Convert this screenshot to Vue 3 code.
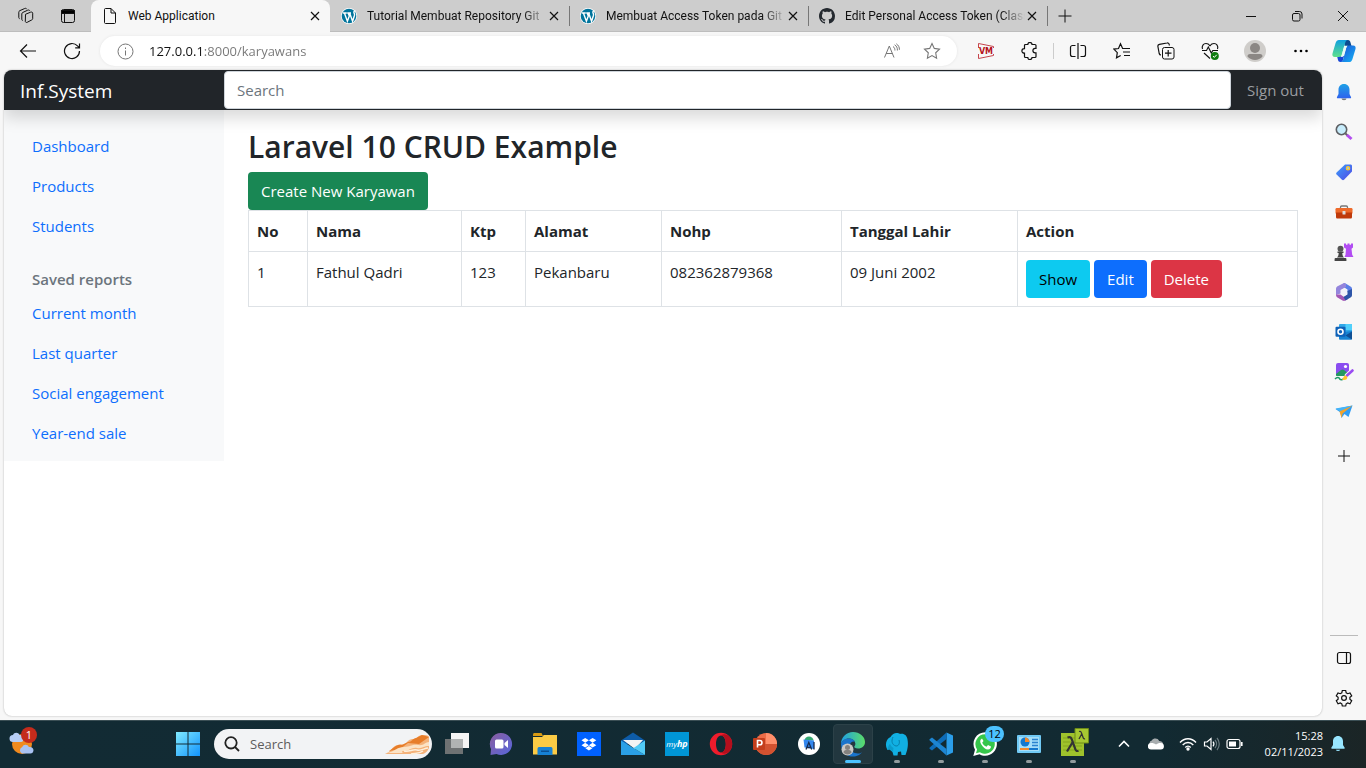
<script setup>
import { ref } from 'vue'

const tabs = [
  { title: 'Web Application', icon: 'page', active: true },
  { title: 'Tutorial Membuat Repository Git', icon: 'wp' },
  { title: 'Membuat Access Token pada Git', icon: 'wp' },
  { title: 'Edit Personal Access Token (Class', icon: 'github' }
]
const mainLinks = ['Dashboard', 'Products', 'Students']
const reportLinks = ['Current month', 'Last quarter', 'Social engagement', 'Year-end sale']
const columns = ['No', 'Nama', 'Ktp', 'Alamat', 'Nohp', 'Tanggal Lahir', 'Action']
const rows = [
  { no: 1, nama: 'Fathul Qadri', ktp: '123', alamat: 'Pekanbaru', nohp: '082362879368', lahir: '09 Juni 2002' }
]
const address = ref('127.0.0.1:8000/karyawans')
const query = ref('')
</script>

<template>
  <div class="desktop">
    <div class="browser">
      <header class="tabstrip">
        <div class="strip-tools">
          <button class="strip-btn" aria-label="Workspaces">
            <svg width="18" height="18" viewBox="0 0 18 18" class="line"><path d="m8.500 7.300 5-2.100c1-.4 2.200-.1 2.200 1v5.300c0 .7-.3 1.100-.9 1.400l-4.600 2.400c-1 .5-1.900 0-1.900-1zM5.700 13.500c-.6-.1-.9-.5-.9-1.100V7c0-.7.3-1.200.9-1.500l5-2.300c.9-.4 1.800-.1 2.100.6M2.600 11.700c-.5-.1-.8-.5-.8-1.100V5.200c0-.7.3-1.200.9-1.500l5-2.200c.9-.4 1.700-.1 2 .6" /></svg>
          </button>
          <button class="strip-btn" aria-label="Tab actions">
            <svg width="16" height="16" viewBox="0 0 16 16" class="line"><rect x="1.500" y="1.500" width="13" height="13" rx="2" /><path d="M1.500 2.500h13v3h-13z" fill="#000" /><path d="M4.500 6v8.500" /></svg>
          </button>
        </div>
        <div v-for="(tab, i) in tabs" :key="i" class="tab" :class="{ active: tab.active }">
          <svg v-if="tab.icon === 'page'" width="16" height="18" viewBox="0 0 16 18" class="line"><path d="M2.500 2.500c0-.6.4-1 1-1H9l4.500 4.500v9.500c0 .6-.4 1-1 1h-9c-.6 0-1-.4-1-1zM9 1.500V6h4.500" /></svg>
          <svg v-else-if="tab.icon === 'wp'" width="16" height="16" viewBox="0 0 16 16"><circle cx="8" cy="8" r="8" fill="#fff" /><circle cx="8" cy="8" r="7.300" fill="#00749c" /><path d="M1.800 5h4M3.400 5l3 8.300L8.300 8 7.200 5M6.200 5h3.800M8.600 5l3 8.300 1.900-6c.4-1.500-.8-2.100-.6-3.400.2-.8.8-1 1.300-.7" fill="none" stroke="#fff" stroke-width="1.400" /></svg>
          <svg v-else width="16" height="16" viewBox="0 0 16 16"><path fill="#24292f" d="M8 0C3.580 0 0 3.580 0 8c0 3.540 2.290 6.530 5.470 7.590.4.070.55-.17.55-.38 0-.19-.01-.82-.01-1.490-2.010.37-2.530-.49-2.690-.94-.09-.23-.48-.94-.82-1.130-.28-.15-.68-.52-.01-.53.63-.01 1.080.58 1.230.82.72 1.210 1.870.87 2.330.66.07-.52.28-.87.51-1.070-1.780-.2-3.640-.89-3.640-3.950 0-.87.31-1.590.82-2.150-.08-.2-.36-1.020.08-2.120 0 0 .67-.21 2.200.82.64-.18 1.320-.27 2-.27s1.360.09 2 .27c1.530-1.040 2.200-.82 2.200-.82.44 1.100.16 1.920.08 2.120.51.56.82 1.270.82 2.150 0 3.070-1.870 3.750-3.650 3.950.29.25.54.73.54 1.480 0 1.070-.01 1.930-.01 2.200 0 .21.15.46.55.38A8.010 8.010 0 0 0 16 8c0-4.420-3.580-8-8-8z" /></svg>
          <a class="tab-title" :class="{ faded: !tab.active }" href="#">{{ tab.title }}</a>
          <button class="tab-close" aria-label="Close tab">
            <svg width="10" height="10" viewBox="0 0 10 10" class="line"><path d="m1 1 8 8M9 1 1 9" stroke-width="1.200" /></svg>
          </button>
        </div>
        <button class="new-tab" aria-label="New tab">
          <svg width="14" height="14" viewBox="0 0 14 14" class="line"><path d="M7 .5v13M.5 7h13" /></svg>
        </button>
        <div class="window-controls">
          <button aria-label="Minimize"><svg width="12" height="12" viewBox="0 0 12 12" class="line"><path d="M1 6.500h10" /></svg></button>
          <button aria-label="Restore"><svg width="12" height="12" viewBox="0 0 12 12" class="line"><rect x="1.500" y="3.500" width="7.500" height="7.500" rx="1.500" /><path d="M4 1.500h4.500a2.500 2.500 0 0 1 2.500 2.500v4.500" /></svg></button>
          <button aria-label="Close window"><svg width="12" height="12" viewBox="0 0 12 12" class="line"><path d="m1 1 10 10M11 1 1 11" /></svg></button>
        </div>
      </header>

      <div class="toolbar">
        <button class="tool" aria-label="Back"><svg width="18" height="16" viewBox="0 0 18 16" class="line"><path d="M17 8H1.500M8 1.500 1.500 8 8 14.500" stroke-width="1.200" /></svg></button>
        <button class="tool" aria-label="Refresh"><svg width="18" height="18" viewBox="0 0 18 18" class="line"><path d="M16.500 9a7.500 7.500 0 1 1-2-5.100l1.800 1.700M16.500 1.500v4.300h-4.300" stroke-width="1.200" /></svg></button>
        <div class="address">
          <svg width="17" height="17" viewBox="0 0 17 17" class="line gray"><circle cx="8.500" cy="8.500" r="7.500" /><path d="M8.500 7.500v5M8.500 4.500V6" /></svg>
          <input v-model="address" class="address-input" type="text" aria-label="Address">
          <button class="address-btn" aria-label="Read aloud"><svg width="18" height="16" viewBox="0 0 18 16" class="line gray"><path d="M1.500 14.500 6.300 3l4.700 11.500M3 10.500h6.500M10 3.500c1.500 1 2 2.300 1.900 4M11.600 1.800c2 1.200 2.900 3 2.800 5.700M13.300.8c2.200 1.400 3.200 3.500 3.100 6" /></svg></button>
          <button class="address-btn" aria-label="Add to favorites"><svg width="18" height="18" viewBox="0 0 18 18" class="line gray"><path d="m9 1.500 2.300 4.900 5.200.7-3.800 3.700.9 5.400L9 13.600l-4.600 2.600.9-5.400L1.500 7.100l5.200-.7z" stroke-width="1.100" /></svg></button>
        </div>
        <button class="tool" aria-label="VM extension">
          <svg width="18" height="18" viewBox="0 0 18 18"><path d="M1.500 6V1.500l15 3V6M1.500 12v4.500l15-3V12" fill="none" stroke="#c6454d" /><text x="9" y="12" class="vm">VM</text></svg>
        </button>
        <button class="tool" aria-label="Extensions"><svg width="18" height="18" viewBox="0 0 18 18" class="line"><path d="M4.500 2.500h2.300a2.100 2.100 0 0 1 4.200 0h3c.6 0 1 .4 1 1v2.800h-.8a2.300 2.300 0 0 0 0 4.600h.8v3.600c0 .6-.4 1-1 1h-3a2.100 2.100 0 0 1-4.200 0H4.500c-.6 0-1-.4-1-1v-3.300h-.3a2.300 2.300 0 0 1 0-4.600h.3V3.500c0-.6.4-1 1-1z" stroke-width="1.200" /></svg></button>
        <span class="divider"></span>
        <button class="tool" aria-label="Split screen"><svg width="18" height="18" viewBox="0 0 18 18" class="line"><path d="M6.500 3.500h-3c-1 0-2 1-2 2v7c0 1 1 2 2 2h3M11.500 3.500h3c1 0 2 1 2 2v7c0 1-1 2-2 2h-3M9 1v16" stroke-width="1.200" /></svg></button>
        <button class="tool" aria-label="Favorites"><svg width="18" height="18" viewBox="0 0 18 18" class="line"><path d="M12.500 6.500H9.600L7.500 1.800 5.500 6.500.9 7.100l3.400 3.500-.8 5.200 4.200-2.300M11 6.500h6M10 10h7M11 13.500h6" stroke-width="1.200" /></svg></button>
        <button class="tool" aria-label="Collections"><svg width="18" height="18" viewBox="0 0 18 18" class="line"><rect x="5.500" y="5.500" width="11.500" height="11.500" rx="2" /><path d="M11.200 8v6.500M8 11.200h6.500M4 13c-1 0-1.600-.6-1.800-1.500L.9 4.500C.7 3.300 1.300 2.500 2.400 2.300L10 1c1-.2 2 .4 2.200 1.500l.2 1" stroke-width="1.200" /></svg></button>
        <button class="tool" aria-label="Browser essentials"><svg width="18" height="18" viewBox="0 0 18 18" class="line"><path d="M1.500 7C.5 4 2.400 1.500 5 1.500c2 0 3 .8 4 2.200 1-1.400 2-2.200 4-2.200 2.600 0 4.500 2.500 3.500 5.500M1 8.500h4.500L7.300 5l3 6 1.500-2.500H17M3 11l6 5.500" stroke-width="1.100" /><circle cx="13.800" cy="14" r="4" fill="#107c10" stroke="none" /><path d="m12 14 1.300 1.400 2.400-2.600" stroke="#fff" /></svg></button>
        <button class="tool profile" aria-label="Profile"><svg width="22" height="22" viewBox="0 0 22 22"><circle cx="11" cy="11" r="11" fill="#cfcdca" /><circle cx="11" cy="8" r="5" fill="#8b8784" /><path d="M3.500 16.500c0-1.500.8-2.500 2.500-2.500h10c1.700 0 2.500 1 2.500 2.500a10 10 0 0 1-15 0z" fill="#8b8784" /></svg></button>
        <button class="tool" aria-label="Settings and more"><svg width="16" height="16" viewBox="0 0 16 16"><circle cx="3.500" cy="8" r="1.300" /><circle cx="9" cy="8" r="1.300" /><circle cx="14.500" cy="8" r="1.300" /></svg></button>
        <button class="tool" aria-label="Copilot">
          <svg width="24" height="24" viewBox="0 0 24 24">
            <defs>
              <linearGradient id="cpA" x1="0" y1="0" x2="0" y2="1"><stop offset="0" stop-color="#0f9fe0" /><stop offset="1" stop-color="#5fe08b" /></linearGradient>
              <linearGradient id="cpB" x1="0" y1="0" x2="1" y2="1"><stop offset="0" stop-color="#1b4fd8" /><stop offset="1" stop-color="#16b4f4" /></linearGradient>
            </defs>
            <path d="M12 1h4c1.500 0 2.200 1 2.500 2.500L19.500 7h-7z" fill="#0b4a8f" />
            <path d="M5 17h7l-1 4c-.4 1.400-1.200 2-2.500 2-1.500 0-2.200-1-2.500-2z" fill="#1746d6" />
            <path d="M7 1h9c-1.700 0-2.300 1.200-2.800 2.800L9.800 15.500C9.300 17.300 8.500 18 7 18H3c-2.300 0-3-1.600-2.500-3.500L3.600 4C4.300 2 5.300 1 7 1z" fill="url(#cpA)" />
            <path d="M17 6.500h4c2.300 0 3 1.600 2.500 3.500l-3.100 10.200c-.7 2-1.700 2.800-3.400 2.800H8.500c1.500 0 2.200-1.200 2.700-2.800L14.200 9c.5-1.800 1.300-2.500 2.800-2.500z" fill="url(#cpB)" />
            <path d="M12.300 6.800h3.700c-1 .3-1.500 1-1.900 2.300l-2.300 7.500c-.3.900-.8 1.300-1.600 1.300H8.500c.8-.4 1.200-1.200 1.500-2.300z" fill="#e9fbf5" />
          </svg>
        </button>
      </div>

      <div class="viewport">
        <div class="page">
          <header class="navbar">
            <a class="brand" href="#">Inf.System</a>
            <input v-model="query" class="search" type="text" placeholder="Search" aria-label="Search">
            <a class="signout" href="#">Sign out</a>
          </header>
          <div class="layout">
            <nav class="sidebar">
              <ul>
                <li v-for="l in mainLinks" :key="l"><a href="#">{{ l }}</a></li>
              </ul>
              <h6>Saved reports</h6>
              <ul>
                <li v-for="l in reportLinks" :key="l"><a href="#">{{ l }}</a></li>
              </ul>
            </nav>
            <main class="content">
              <h2>Laravel 10 CRUD Example</h2>
              <a class="btn success" href="#">Create New Karyawan</a>
              <table>
                <colgroup>
                  <col class="c-no"><col class="c-nama"><col class="c-ktp"><col class="c-alamat"><col class="c-nohp"><col class="c-lahir"><col>
                </colgroup>
                <thead>
                  <tr><th v-for="c in columns" :key="c" scope="col">{{ c }}</th></tr>
                </thead>
                <tbody>
                  <tr v-for="r in rows" :key="r.no">
                    <td>{{ r.no }}</td>
                    <td>{{ r.nama }}</td>
                    <td>{{ r.ktp }}</td>
                    <td>{{ r.alamat }}</td>
                    <td>{{ r.nohp }}</td>
                    <td>{{ r.lahir }}</td>
                    <td>
                      <div class="actions">
                        <a class="btn info" href="#">Show</a>
                        <a class="btn primary" href="#">Edit</a>
                        <button class="btn danger" type="submit">Delete</button>
                      </div>
                    </td>
                  </tr>
                </tbody>
              </table>
            </main>
          </div>
        </div>

        <aside class="edge-bar">
          <button aria-label="Notifications"><svg width="18" height="18" viewBox="0 0 18 18"><defs><linearGradient id="bell" x1="0" y1="0" x2="0" y2="1"><stop offset="0" stop-color="#1fa2e6" /><stop offset="1" stop-color="#2f62ee" /></linearGradient></defs><path d="M6.500 15.500h5a2.500 1.800 0 0 1-5 0z" fill="#777" /><path d="M9 1C5.500 1 3.500 3.500 3.500 6.500V11L2 14c-.3.800 0 1.300.8 1.300h12.400c.8 0 1.100-.5.800-1.300l-1.500-3V6.500C14.500 3.500 12.500 1 9 1z" fill="url(#bell)" /></svg></button>
          <button aria-label="Search"><svg width="18" height="18" viewBox="0 0 18 18" fill="none"><path d="m10.500 10.500 2 2" stroke="#666" stroke-width="2" /><path d="m12 12 4.500 4" stroke="#b44df0" stroke-width="3" /><circle cx="6.500" cy="6.500" r="5.200" fill="#c7ecfb" stroke="#5e6064" stroke-width="1.600" /></svg></button>
          <button aria-label="Shopping"><svg width="18" height="18" viewBox="0 0 18 18"><defs><linearGradient id="tagG" x1="0" y1="0" x2="1" y2="1"><stop offset="0" stop-color="#3da0fa" /><stop offset="1" stop-color="#5046e5" /></linearGradient></defs><path d="M10 1.500h5.500c.8 0 1.500.6 1.500 1.400V8.500L9 16.800c-.7.6-1.300.6-2 0L1.600 11.500c-.6-.6-.6-1.200 0-1.900z" fill="url(#tagG)" /><circle cx="13" cy="5.300" r="1.700" fill="#9fc5e8" stroke="#ffc928" stroke-width="1.200" /></svg></button>
          <button aria-label="Tools"><svg width="18" height="18" viewBox="0 0 18 18"><path d="M5.500 6V4.200c0-.8.500-1.200 1.200-1.200h4.600c.7 0 1.200.4 1.200 1.200V6" fill="none" stroke="#777" stroke-width="1.300" /><rect x=".5" y="5" width="17" height="6" rx="1.200" fill="#ee6a2a" /><path d="M1 9.500h16V14c0 .8-.4 1.500-1.200 1.500H2.200C1.400 15.500 1 14.800 1 14z" fill="#bf3a0b" /><rect x="7.500" y="8" width="3" height="3.500" rx=".6" fill="#ddd" /></svg></button>
          <button aria-label="Games"><svg width="20" height="20" viewBox="0 0 20 20"><path d="M10 1.500h2v1.300h1.500V1.500h2v1.300H17V1.500h2v4l-1.500 1.200.7 6 1.300 2.300H10.500l1-2.300.5-6L10 5.500z" fill="#b24df2" /><circle cx="6.500" cy="6.800" r="3" fill="#555" /><path d="M3.500 9.500h6v1.600H8.300c0 2 .6 3.400 1.700 4.400H3c1.100-1 1.700-2.400 1.700-4.400H3.500zM1.500 16h10c.6 0 .9.400.9 1v2H.6v-2c0-.6.300-1 .9-1z" fill="#444" /></svg></button>
          <button aria-label="Microsoft 365"><svg width="18" height="18" viewBox="0 0 18 18"><path d="M9 0c.6 0 1 .2 1.600.5L15.500 3.500c1 .6 1.500 1.500 1.500 2.500v6L12.500 9V6.500L7 3z" fill="#5b7fe8" /><path d="M9 0 3 3C1.700 3.700 1 4.700 1 6v6l4.500-1.500V7L11 4V1z" fill="#9485dc" /><path d="M1 11.500c0 1.500.4 2.300 1.500 3l5 3c1 .6 2 .6 3 0L13 16V11.500L9 14l-3.500-2.500z" fill="#a357b5" /><path d="M12.500 8 17 6v6c0 1.100-.5 1.800-1.500 2.500l-5 3L8.500 14l4-2.500z" fill="#2d55a8" /><path d="m9 5.500 3 1.700v3.600l-3 1.700-3-1.700V7.200z" fill="#f2f2fa" /></svg></button>
          <button aria-label="Outlook"><svg width="18" height="18" viewBox="0 0 18 18"><rect x="4" y="1" width="13" height="14" rx="1" fill="#31a8e8" /><path d="M10.500 1H16c.6 0 1 .4 1 1v5h-6.500z" fill="#50d0fb" /><path d="M4 9.500 17 8v7.500c0 .8-.5 1.300-1.300 1.300H5.200c-.8 0-1.200-.5-1.200-1.300z" fill="#1683d3" /><path d="m17 8.500-6.500 4 6.500 4z" fill="#0f4f94" /><rect x=".5" y="3.800" width="10" height="10" rx="1" fill="#0f62b8" /><circle cx="5.500" cy="8.800" r="2.500" fill="none" stroke="#fff" stroke-width="1.600" /></svg></button>
          <button aria-label="Image creator"><svg width="20" height="20" viewBox="0 0 20 20"><rect x="2" y="1" width="13" height="13" rx="2" fill="#8a4df0" /><path d="m2 12 5-4c1-.7 2-.7 3 0l5 4v1c0 .6-.5 1-1 1H3c-.6 0-1-.4-1-1z" fill="#249860" /><circle cx="11.500" cy="4.500" r="1.600" fill="#fff" /><path d="M1 17c2-2 4-2 4.500-.5S8 18 9.500 17" fill="none" stroke="#1f9a67" stroke-width="1.600" /><path d="m18.500 8.500-5.500 5" stroke="#f7f7f7" stroke-width="4.500" stroke-linecap="round" /><path d="m18.500 8.500-5.500 5" stroke="#9a4cf2" stroke-width="2.600" stroke-linecap="round" /><path d="M11 13.500c1.500 0 2.500 1 2.300 2.300C13 18 10.500 18.500 8 17.700c1.500-.8 1-3.400 3-4.200z" fill="#ffc42e" /></svg></button>
          <button aria-label="Drop"><svg width="18" height="18" viewBox="0 0 18 18"><path d="M17.500 2.500 13.500 14 9.500 11 6.500 15 5.500 9.500.5 6z" fill="#2f9df4" /><path d="M17.500 2.500.5 5.500l4.500 3z" fill="#45b4f8" /><path d="M17.500 2.500 4.500 8.500l2 6.500 1.200-4.500z" fill="#f3a32b" /></svg></button>
          <button class="customize" aria-label="Customize sidebar"><svg width="14" height="14" viewBox="0 0 14 14" class="line"><path d="M7 1v12M1 7h12" /></svg></button>
          <span class="edge-line"></span>
          <button aria-label="Toggle sidebar"><svg width="16" height="16" viewBox="0 0 16 16" class="line"><rect x="1.500" y="2.500" width="13" height="11" rx="2" stroke-width="1.200" /><path d="M10.500 2.500v11" stroke-width="1.200" /></svg></button>
          <button aria-label="Settings"><svg width="18" height="18" viewBox="0 0 18 18" class="line"><circle cx="9" cy="9" r="2.400" stroke-width="1.200" /><path d="M7.300 1.500h3.400l.5 2.300 1.500.9 2.300-.8 1.700 3-1.800 1.500v1.800l1.800 1.500-1.700 3-2.300-.8-1.500.9-.5 2.200H7.300l-.5-2.200-1.500-.9-2.300.8-1.700-3 1.800-1.500V8.400L1.300 6.900l1.700-3 2.300.8 1.500-.9z" stroke-width="1.200" /></svg></button>
        </aside>
      </div>
    </div>

    <footer class="taskbar">
      <div class="widgets">
        <button class="weather" aria-label="Weather">
          <svg width="26" height="26" viewBox="0 0 26 26"><circle cx="13" cy="13" r="10" fill="#f08a1e" /><path d="M4 11a3.500 3.500 0 0 1 0-7c1-3 5.500-3 6.500 0 3-.5 4.500 1.500 4.500 3.500S13.500 11 12 11z" fill="#b6cdf5" /><path d="M13 22.500a3.500 3.500 0 0 1 .3-6.500c1-3 5.500-3 6.500 0 3-.5 4.700 1.200 4.700 3.200s-1.500 3.300-3 3.300z" fill="#a9c3f3" /></svg>
          <span class="weather-badge">1</span>
        </button>
      </div>
      <button class="task" aria-label="Start"><svg width="24" height="24" viewBox="0 0 24 24"><defs><linearGradient id="win" x1="0" y1="0" x2="1" y2="1"><stop offset="0" stop-color="#80eaff" /><stop offset="1" stop-color="#1293fb" /></linearGradient></defs><path d="M0 0h11.500v11.500H0zM12.500 0H24v11.500H12.500zM0 12.500h11.500V24H0zM12.500 12.500H24V24H12.500z" fill="url(#win)" /></svg></button>
      <label class="task-search">
        <svg width="16" height="16" viewBox="0 0 16 16" fill="none" stroke="#222" stroke-width="1.800"><circle cx="7" cy="6.800" r="5.700" /><path d="m11 11 4 4" /></svg>
        <input type="text" placeholder="Search" aria-label="Search Windows">
        <svg class="dunes" width="48" height="24" viewBox="0 0 48 24"><path d="M1 22c6-2 7-8 13-9 4-1 6 0 9-3s4-3 7-3 4-4 8-4 6 0 7 2v11c-2 4-4 6-8 6z" fill="#f4b27a" /><path d="M5 19c6-4 8-7 13-6l6-3c4 0 5-4 8-4l6-3 7 2-10 7-11-1-8 6z" fill="#e77d2a" /><path d="M3 21c9-2 10-6 17-6s8-3 14-2 7-3 11-3v4c-6 0-7 3-12 2s-8 3-13 3c-3 0-3 2 1 2z" fill="#fbe3c6" /><path d="M20 19c6 1 8-2 13-1s7-2 11-2M27 22c4-1 8 0 12-3" fill="none" stroke="#fdf0dd" stroke-width="1.500" /></svg>
      </label>
      <button class="task first" aria-label="Task view"><svg width="24" height="24" viewBox="0 0 24 24"><path d="M6 1h18v15H6z" fill="#f5f5f5" /><path d="M0 7h18v15H0z" fill="#6e7273" /><path d="M6 7h12v9H6z" fill="#b0b3b3" /></svg></button>
      <button class="task" aria-label="Chat"><svg width="24" height="24" viewBox="0 0 24 24"><defs><linearGradient id="chat" x1="0" y1="0" x2="1" y2="1"><stop offset="0" stop-color="#8a5d9e" /><stop offset="1" stop-color="#5666dd" /></linearGradient></defs><path d="M12 1a11 11 0 1 1-4.500 21L1.500 23 2 17A11 11 0 0 1 12 1z" fill="url(#chat)" /><rect x="6" y="7.500" width="8.500" height="9" rx="1.500" fill="#fff" /><path d="m15.500 11 3.500-3v8l-3.500-3z" fill="#fff" /></svg></button>
      <button class="task" aria-label="File Explorer"><svg width="24" height="24" viewBox="0 0 24 24"><path d="M0 2.500C0 1.600.6 1 1.500 1h7L10 4H0z" fill="#d89a12" /><path d="M0 5h9l1.800-2H24v19.500H0z" fill="#fbcb45" /><path d="M4.500 23v-6c0-1.500.8-2 2-2h11c1.200 0 2 .5 2 2v6z" fill="#1681d4" /><path d="M8 18.500h8V20H8z" fill="#0a4f92" /></svg></button>
      <button class="task" aria-label="Dropbox"><svg width="24" height="24" viewBox="0 0 24 24"><path d="M0 0h24v24H0z" fill="#0061ff" /><path d="m8.200 6 3.700 2.300-3.700 2.400-3.700-2.400zM15.600 6l3.700 2.300-3.700 2.400-3.700-2.400zM8.200 10.800l3.700 2.400-3.700 2.300-3.700-2.300zM15.600 10.800l3.700 2.400-3.700 2.300-3.700-2.300zM11.900 14l3.500 2.200-3.500 2.300-3.500-2.300z" fill="#fff" /></svg></button>
      <button class="task" aria-label="Mail"><svg width="24" height="24" viewBox="0 0 24 24"><path d="m0 8.500 12-8 12 8V12H0z" fill="#0e5ca8" /><path d="M2 8h20l-8 9z" fill="#f4f4f4" /><path d="M0 8.500 24 23H0z" fill="#2aa0e6" /><path d="M24 8.500V23L12.500 16z" fill="#52cbf7" /></svg></button>
      <button class="task" aria-label="myHP"><span class="hp">my<b>hp</b></span></button>
      <button class="task" aria-label="Opera"><svg width="24" height="24" viewBox="0 0 24 24"><path fill-rule="evenodd" d="M12 .8a11.200 11.200 0 1 1 0 22.400A11.200 11.200 0 0 1 12 .8zm0 2.700c-3 0-5 3.800-5 8.500s2 8.500 5 8.500 4.800-3.800 4.800-8.500S15 3.500 12 3.500z" fill="#ef1c2c" /><path d="M12 3.500c4.500-3.500 11.200 1 11.200 8.500S16.500 24 12 20.500c3 0 4.800-3.800 4.800-8.500S15 3.500 12 3.500z" fill="#b40f1d" /></svg></button>
      <button class="task" aria-label="PowerPoint"><svg width="24" height="24" viewBox="0 0 24 24"><circle cx="13" cy="12" r="11" fill="#ed6c47" /><path d="M13 1a11 11 0 0 1 11 11H13z" fill="#ff8f6b" /><path d="M2 12h22a11 11 0 0 1-22 0z" fill="#d35230" /><rect x="0" y="6" width="12" height="12" rx="1" fill="#c43e1c" /><path d="M4.500 15.500v-7h2.300a2.100 2.100 0 0 1 0 4.300H4.500" fill="none" stroke="#fff" stroke-width="1.600" /></svg></button>
      <button class="task" aria-label="Android Studio"><svg width="24" height="24" viewBox="0 0 24 24" fill="none"><circle cx="12" cy="12" r="11" fill="#fff" /><path d="M7.500 8.500a4.500 4 0 0 1 9 0z" fill="#34a871" /><path d="M6.500 7.500 17 8.500V17L7.500 15.500z" fill="#3487ef" /><path d="m9 17.500 2.800-7 2.900 7M10 15.500h3.800M17 10v7.500" stroke="#172b50" stroke-width="1.300" /></svg></button>
      <button class="task current" aria-label="Microsoft Edge"><svg width="26" height="26" viewBox="0 0 26 26"><defs><linearGradient id="edge" x1="0" y1="0" x2="1" y2="0"><stop offset="0" stop-color="#1f9fe5" /><stop offset="1" stop-color="#5bdc68" /></linearGradient></defs><path d="M1 13C1 6 6.500 1 13 1s12 4.500 12 10c0 4-3 6.500-7 6.500-3 0-4-1.200-3.700-2 .8-1 1.200-2 1-3.300C14.700 9 12 7.500 9 7.500c-4 0-7 2.500-8 5.500z" fill="url(#edge)" /><path d="M1 13c1-3.500 4-5.500 8-5.500 3 0 5 1.500 6 3-3-.5-5.500 1.500-5.500 5 0 4 4 7 8.500 7 1.500 0 3-.5 4-1A12 12 0 0 1 1 13z" fill="#1a74cc" /><circle cx="7.500" cy="18.500" r="6" fill="#c9c7c5" /><circle cx="7.500" cy="16.500" r="2.500" fill="#84817e" /><path d="M3.500 21.500c0-2 1.500-2.500 4-2.500s4 .5 4 2.500a5 5 0 0 1-8 0z" fill="#84817e" /></svg><i></i></button>
      <button class="task running" aria-label="MySQL client"><svg width="24" height="24" viewBox="0 0 24 24"><path d="M2.500 18C-.5 13 1 7 5.500 5 8 0 13 .500 15 2c4-1 7 1.500 7.500 5.500.8 4 .3 8-.5 11l-1.500 4.500h-4L16 19.500l-3 .5-.5 3.500h-4L7.500 20 4 17z" fill="#11b0e3" /><path d="M8 5c-2 4-1 8 3 9 3 0 4-3 3-6" fill="none" stroke="#087fab" /><path d="M2.500 18c0-2 1-5 2.500-6 1 2 2 3 3.500 4l-.5 4-3-2.500z" fill="#0a9bcb" /></svg><i></i></button>
      <button class="task running" aria-label="Visual Studio Code"><svg width="24" height="24" viewBox="0 0 24 24"><path d="m17.500.5 6.500 3v17l-6.500 3z" fill="#2b9eea" /><path d="M17.500.500V7L3 18.500.5 16.800v-1z" fill="#0d6cb8" /><path d="M17.500 23.500V17L3 5.500.5 7.200v1z" fill="#1d85d2" /></svg><i></i></button>
      <button class="task running" aria-label="WhatsApp"><svg width="24" height="24" viewBox="0 0 24 24"><path d="M12.200.3a11.700 11.700 0 0 1 0 23.400c-2 0-4-.5-5.600-1.500L.3 24 2 17.800A11.700 11.700 0 0 1 12.200.3z" fill="#fff" /><path d="M12.200 2.300a9.700 9.700 0 1 1-5.300 17.900L3 21.200l1.100-3.800A9.700 9.700 0 0 1 12.200 2.300z" fill="#35c64b" /><path d="M9 6.500c-2 1-2.300 3-1 5.500 2 3.500 4.500 5.500 7 5.500 2 0 3-1.500 3-3l-3-1.500-1.500 1.700c-2-.8-3.400-2-4.300-4L10.500 9z" fill="#fff" /></svg><span class="count">12</span><i></i></button>
      <button class="task running" aria-label="Control Panel"><svg width="24" height="24" viewBox="0 0 24 24"><rect y="3" width="24" height="18" rx="1" fill="#70caf5" /><path d="M2 5h20v14H2z" fill="#a5def9" /><circle cx="8" cy="10" r="4.500" fill="#1378ce" /><path d="M8 10V5.500a4.500 4.500 0 0 1 4.500 4.500z" fill="#f38a2c" /><path d="M15 7.500h6M15 10.500h6M15 13.500h6" stroke="#2b83cf" stroke-width="1.500" /><path d="M3 17h9" stroke="#f38a2c" stroke-width="2" /><path d="M12 17h9" stroke="#1378ce" stroke-width="2" /></svg><i></i></button>
      <button class="task running" aria-label="Laragon"><svg class="lambda" width="28" height="28" viewBox="0 0 28 28" fill="none"><path d="M0 5h23v23H0z" fill="#9fc22c" /><path d="M2 10h19M2 14h19M2 18h19M2 22h19" stroke="#83a51d" /><path d="M6.500 9.500c3-1 3.700 0 4.500 2.500l3.500 9.500c.5 1.500 1.500 1.800 3 1.200M11.700 14 6 23.500" stroke="#333" stroke-width="2.200" /><path d="M14 .5h13.500V15H14z" fill="#a6c832" stroke="#6d8b17" /><path d="M18 3.500c1.500-.5 2 0 2.400 1.300l1.800 5c.3 1 .8 1.200 1.800.8M20.700 6 18 11" stroke="#333" stroke-width="1.300" /></svg><i></i></button>

      <div class="tray">
        <button class="tray-btn" aria-label="Show hidden icons"><svg width="12" height="12" viewBox="0 0 12 12" fill="none" stroke="#fff" stroke-width="1.600"><path d="m1 8.500 5-5 5 5" /></svg></button>
        <button class="tray-btn" aria-label="OneDrive"><svg width="16" height="12" viewBox="0 0 16 12"><path d="M3 8a3 3 0 0 1 .8-5.500C5.500-.3 10 0 11.200 3c2 0 3.800 1 3.800 3z" fill="#a8adaf" /><path d="M3.200 11.500a3.200 3.200 0 0 1-.3-6.400c2-.3 3.100.3 5.100 1.400 1-.9 2.600-1.500 4.500-1.500a3.200 3.200 0 0 1 .3 6.500z" fill="#fff" /></svg></button>
        <button class="quick" aria-label="Network, volume and battery">
          <svg width="18" height="14" viewBox="0 0 18 14" fill="none" stroke="#fff" stroke-width="1.400"><path d="M1 5.500c4.500-5 11.500-5 16 0M3.700 8c3-3.300 7.600-3.300 10.600 0M6.300 10.500c1.600-1.800 3.800-1.800 5.400 0" /><circle cx="9" cy="12" r="1" fill="#fff" /></svg>
          <svg width="17" height="14" viewBox="0 0 17 14" fill="none" stroke="#fff" stroke-width="1.200"><path d="M1.500 5h2.500L8 1.500v11L4 9H1.500z" /><path d="M10 4.700c1 1.200 1 3.400 0 4.600" /><path d="M12 3c2 2.300 2 5.700 0 8M14 1c3 3.500 3 8.500 0 12" stroke="#6c7c80" /></svg>
          <svg width="17" height="12" viewBox="0 0 17 12" fill="none" stroke="#fff" stroke-width="1.200"><rect x="1" y="1.500" width="13" height="9" rx="2" /><path d="M3 3.500h7v5H3z" fill="#fff" stroke="none" /><path d="M15.800 4v4" stroke-width="1.600" /></svg>
        </button>
        <button class="clock"><span>15:28</span><span>02/11/2023</span></button>
        <button class="notify" aria-label="Notifications"><svg width="14" height="16" viewBox="0 0 14 16" fill="#98e6ff"><path d="M7 0C4 0 2 2.300 2 5.200V9L.3 11.800c-.2.500 0 .9.600.9h12.200c.6 0 .8-.4.6-.9L12 9V5.200C12 2.300 10 0 7 0zM4.800 13.700h4.400a2.300 1.800 0 0 1-4.400 0z" /></svg></button>
      </div>
    </footer>
  </div>
</template>

<style>
html,
body {
  margin: 0;
  background: #f7f7f7;
}
</style>

<style scoped>
.desktop,
.desktop * {
  box-sizing: border-box;
}
.desktop {
  --ui: 'Segoe UI', 'Open Sans', 'Noto Sans', sans-serif;
  display: flex;
  flex-direction: column;
  min-height: 100vh;
  font-family: var(--ui);
  color: #212529;
}
button,
input {
  font-family: var(--ui);
}
button {
  border: 0;
  background: none;
  padding: 0;
  color: inherit;
}
a {
  text-decoration: none;
}
svg {
  display: block;
  flex: none;
}
.line {
  fill: none;
  stroke: #111;
}
.gray {
  stroke: #767676;
}
.vm {
  font-family: 'DejaVu Sans', sans-serif;
  font-size: 8px;
  font-weight: bold;
  text-anchor: middle;
  fill: #b5121b;
}
.browser {
  flex: 1;
  display: flex;
  flex-direction: column;
  background: #f7f7f7;
}

.tabstrip {
  display: flex;
  height: 32px;
  background: #cdcdcd;
  font-family: 'Segoe UI', Roboto, 'Open Sans', sans-serif;
  font-size: 12px;
  color: #111;
  box-shadow: inset 0 -1px 0 #bdbdbd;
}
.strip-tools {
  display: flex;
  width: 91px;
  padding-left: 5px;
}
.strip-btn {
  display: grid;
  place-items: center;
  width: 42px;
}
.tab {
  display: flex;
  align-items: center;
  flex: 0 1 239px;
  min-width: 0;
  padding: 0 8px 0 11px;
  position: relative;
}
.tab:not(.active)::after {
  content: '';
  position: absolute;
  right: -1px;
  top: 6px;
  height: 20px;
  border-right: 1px solid #777;
}
.tab.active {
  background: #f7f7f7;
  border-radius: 8px 8px 0 0;
}
.tab-title {
  flex: 1;
  min-width: 0;
  margin-left: 10px;
  overflow: hidden;
  white-space: nowrap;
  color: inherit;
}
.tab-title.faded {
  mask-image: linear-gradient(to left, transparent, #000 24px);
}
.tab-close {
  display: grid;
  place-items: center;
  width: 14px;
  height: 16px;
}
.new-tab {
  display: grid;
  place-items: center;
  width: 36px;
}
.window-controls {
  display: flex;
  margin-left: auto;
}
.window-controls button {
  display: grid;
  place-items: center;
  width: 46px;
}

.toolbar {
  display: flex;
  align-items: center;
  height: 38px;
  padding-left: 6px;
}
.tool {
  display: grid;
  place-items: center;
  flex: none;
  width: 44px;
  height: 32px;
}
.tool.profile {
  width: 46px;
}
.divider {
  width: 2px;
  height: 16px;
  margin-right: 2px;
  border-right: 1px solid #ccc;
}
.address {
  display: flex;
  align-items: center;
  flex: 1;
  min-width: 0;
  height: 30px;
  margin: 0 7px 0 6px;
  padding: 0 5px 0 17px;
  border-radius: 15px;
  background: #fff;
  box-shadow: 0 0 3px #e4e4e4;
}
.address-input {
  flex: 1;
  min-width: 0;
  margin-left: 15px;
  padding: 0;
  border: 0;
  outline: 0;
  font-size: 13px;
  color: transparent;
  background: linear-gradient(to right, #111 54px, #767676 54px) text;
}
.address-btn {
  display: grid;
  place-items: center;
  width: 40px;
  height: 28px;
}

.viewport {
  flex: 1;
  display: flex;
}
.page {
  flex: 1;
  min-width: 0;
  margin: 0 0 4px 4px;
  background: #fff;
  border-radius: 8px;
  box-shadow: 0 0 2px #aaa;
  overflow: hidden;
  font-size: 15px;
  line-height: 24px;
}
.navbar {
  display: flex;
  align-items: stretch;
  height: 40px;
  position: relative;
  background: #212529;
  box-shadow: 0 8px 16px rgba(0, 0, 0, 0.15);
}
.brand {
  width: 220px;
  padding: 7px 16px;
  font-size: 19px;
  line-height: 28px;
  color: #fff;
}
.search {
  flex: 1;
  min-width: 0;
  margin: 1px 0;
  padding: 0 12px;
  border: 1px solid #ced4da;
  border-radius: 4px;
  outline: 0;
  font-size: 15px;
  background: #fff;
}
.search::placeholder {
  color: #6c757d;
  opacity: 1;
}
.signout {
  min-width: 91px;
  padding: 8px 16px;
  color: #9a9da0;
}
.layout {
  display: flex;
  align-items: flex-start;
}
.sidebar {
  width: 220px;
  padding: 16px 12px 8px;
  background: #f8f9fa;
}
.sidebar ul {
  margin: 0;
  padding: 0;
  list-style: none;
}
.sidebar li a {
  display: block;
  padding: 8px 16px;
  color: #0d6efd;
}
.sidebar h6 {
  margin: 24px 16px 4px;
  font-size: 15px;
  font-weight: 600;
  line-height: 19px;
  color: #6c757d;
}
.content {
  flex: 1;
  min-width: 0;
  padding: 16px 24px;
}
h2 {
  margin: 0 0 4px;
  font-size: 30px;
  font-weight: 600;
  line-height: 42px;
}
.btn {
  display: inline-block;
  padding: 6px 12px;
  border: 1px solid transparent;
  border-radius: 4px;
  font-size: 15px;
  line-height: 24px;
  vertical-align: top;
}
.success {
  background: #198754;
  color: #fff;
}
.info {
  background: #0dcaf0;
  color: #000;
}
.primary {
  background: #0d6efd;
  color: #fff;
}
.danger {
  background: #dc3545;
  color: #fff;
}
table {
  width: 100%;
  table-layout: fixed;
  border-collapse: collapse;
}
.c-no { width: 59px; }
.c-nama { width: 154px; }
.c-ktp { width: 64px; }
.c-alamat { width: 136px; }
.c-nohp { width: 180px; }
.c-lahir { width: 176px; }
th,
td {
  padding: 8px;
  border: 1px solid #dee2e6;
  text-align: left;
  vertical-align: top;
}
.actions {
  display: flex;
  gap: 4px;
}

.edge-bar {
  display: flex;
  flex-direction: column;
  align-items: center;
  width: 44px;
  padding: 2px 0;
}
.edge-bar button {
  display: grid;
  place-items: center;
  width: 40px;
  height: 40px;
}
.edge-bar .customize {
  margin-top: 4px;
}
.edge-line {
  width: 28px;
  height: 1px;
  margin: auto 0 2px;
  background: #bbb;
}

.taskbar {
  display: flex;
  align-items: center;
  height: 48px;
  background: linear-gradient(to right, #122b34, #122a32 85%, #1b2526);
  box-shadow: inset 0 1px 0 #3b4f55;
  color: #fff;
}
.widgets {
  width: 166px;
  padding-left: 9px;
}
.weather {
  display: block;
  position: relative;
}
.weather-badge,
.count {
  position: absolute;
  border-radius: 8px;
  height: 16px;
  line-height: 16px;
  font-size: 11px;
  text-align: center;
}
.weather-badge {
  top: -4px;
  left: 12px;
  width: 16px;
  background: #c42b1c;
  color: #fff;
}
.count {
  top: 5px;
  right: 3px;
  width: 19px;
  background: #4cc2ff;
  color: #000;
}
.task {
  display: grid;
  place-items: center;
  position: relative;
  flex: none;
  width: 44px;
  height: 46px;
}
.task.first {
  margin-left: 3px;
}
.task i {
  position: absolute;
  bottom: 4px;
  left: 19px;
  width: 6px;
  height: 3px;
  border-radius: 2px;
  background: #929b9e;
}
.current::before {
  content: '';
  position: absolute;
  inset: 3px 2px;
  border-radius: 4px;
  border: 1px solid #2c4148;
  background: #22373f;
}
.current svg {
  position: relative;
}
.task.current i {
  left: 14px;
  width: 16px;
  background: #4cc2ff;
}
.lambda {
  margin: 0 0 4px 4px;
}
.hp {
  width: 24px;
  height: 24px;
  background: #0096d6;
  font-size: 8px;
  line-height: 24px;
  font-style: italic;
  text-align: center;
}
.hp b {
  font-size: 9px;
}
.task-search {
  display: flex;
  align-items: center;
  width: 218px;
  height: 30px;
  margin-left: 4px;
  padding-left: 10px;
  border-radius: 15px;
  background: #f2f3f5;
  overflow: hidden;
}
.task-search input {
  flex: 1;
  min-width: 0;
  padding: 0 0 0 10px;
  border: 0;
  outline: 0;
  font-size: 13px;
  background: none;
}
.task-search input::placeholder {
  color: #5c5c5c;
  opacity: 1;
}
.tray {
  display: flex;
  align-items: center;
  margin-left: auto;
  padding-right: 21px;
}
.tray-btn {
  display: grid;
  place-items: center;
  width: 32px;
  height: 40px;
}
.quick {
  display: flex;
  align-items: center;
  gap: 6px;
  padding: 0 6px 0 7px;
}
.clock {
  display: flex;
  flex-direction: column;
  align-items: flex-end;
  padding: 0 8px 0 16px;
  font-size: 11px;
  line-height: 16px;
  color: #fff;
}
</style>
